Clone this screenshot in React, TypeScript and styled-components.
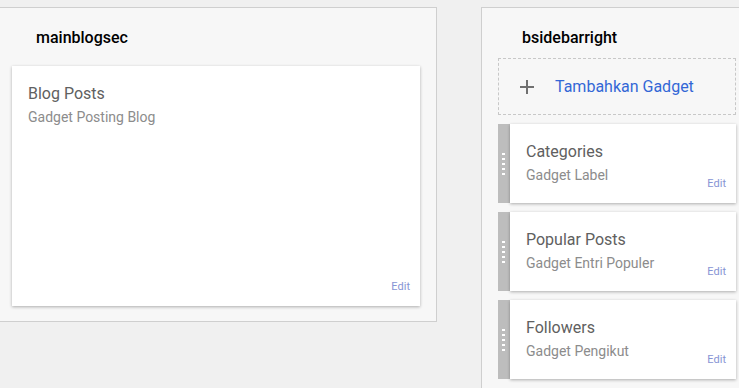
import React from 'react'
import styled, { createGlobalStyle } from 'styled-components';

const GlobalStyle = createGlobalStyle`
    html, body {
        margin: 0;
        padding: 0;
        background: #f0f0f0;
        font-family: Roboto, "Liberation Sans", Arial, sans-serif;
        overflow: hidden;
    }
`;

const Page = styled.div`
    display: flex;
    align-items: flex-start;
    gap: 44px;
    padding-top: 7px;
    margin-left: -5px;
`;

const Section = styled.div<{ $width: number; $tall?: boolean }>`
    box-sizing: border-box;
    width: ${p => p.$width}px;
    flex-shrink: 0;
    min-height: ${p => (p.$tall ? '420px' : 'auto')};
    background: #f7f7f7;
    border: 1px solid #cfcfcf;
    padding: 20px 16px 15px;
`;

const SectionTitle = styled.div<{ $gap: number }>`
    padding-left: 24px;
    font-size: 16px;
    line-height: 20px;
    font-weight: 500;
    color: #000;
    margin-bottom: ${p => p.$gap}px;
`;

const BigCard = styled.div`
    display: flex;
    flex-direction: column;
    height: 240px;
    box-sizing: border-box;
    padding: 18px 10px 12px 16px;
    background: #fff;
    box-shadow: 0 1px 3px rgba(0, 0, 0, 0.3);
`;

const WidgetTitle = styled.div`
    font-size: 16px;
    line-height: 20px;
    color: #606060;
`;

const WidgetSub = styled.div`
    font-size: 14px;
    line-height: 18px;
    color: #8c8c8c;
    margin-top: 4px;
`;

const EditLink = styled.a`
    font-size: 11px;
    line-height: 14px;
    color: #8794d4;
    text-decoration: none;
    cursor: pointer;
    align-self: flex-end;
`;

const BigEdit = styled(EditLink)`
    margin-top: auto;
`;

const AddBox = styled.div`
    display: flex;
    align-items: center;
    gap: 21px;
    height: 57px;
    box-sizing: border-box;
    padding-left: 21px;
    border: 1px dashed #c8c8c8;
    margin-bottom: 9px;
`;

const AddLabel = styled.span`
    font-size: 16px;
    line-height: 20px;
    color: #3367d6;
`;

const GadgetList = styled.div`
    display: flex;
    flex-direction: column;
    gap: 9px;
`;

const GadgetRow = styled.div`
    display: flex;
    height: 79px;
`;

const Handle = styled.div`
    width: 12px;
    flex-shrink: 0;
    display: flex;
    align-items: center;
    padding-left: 4px;
    box-sizing: border-box;
    background: #bdbdbd;
    cursor: move;

    &::before {
        content: '';
        width: 3px;
        height: 22px;
        background: repeating-linear-gradient(to bottom, #fff 0 2px, transparent 2px 5px);
    }
`;

const GadgetBody = styled.div`
    flex: 1;
    display: grid;
    grid-template-columns: 1fr auto;
    grid-template-rows: auto 1fr;
    box-sizing: border-box;
    padding: 18px 10px 12px 16px;
    background: #fff;
    box-shadow: 0 1px 3px rgba(0, 0, 0, 0.3);

    ${WidgetTitle} {
        grid-column: 1 / 3;
    }
    ${WidgetSub} {
        align-self: start;
    }
    ${EditLink} {
        align-self: end;
    }
`;

const PlusIcon = () => (
    <svg width="14" height="14" viewBox="0 0 14 14">
        <path d="M7 0v14M0 7h14" stroke="#707070" strokeWidth="2" />
    </svg>
);

const gadgets = [
    { title: 'Categories', sub: 'Gadget Label' },
    { title: 'Popular Posts', sub: 'Gadget Entri Populer' },
    { title: 'Followers', sub: 'Gadget Pengikut' },
];

const App = () => {
  return (
    <>
      <GlobalStyle />
      <Page>
        <Section $width={442}>
          <SectionTitle $gap={18}>mainblogsec</SectionTitle>
          <BigCard>
            <WidgetTitle>Blog Posts</WidgetTitle>
            <WidgetSub>Gadget Posting Blog</WidgetSub>
            <BigEdit>Edit</BigEdit>
          </BigCard>
        </Section>
        <Section $width={272} $tall>
          <SectionTitle $gap={10}>bsidebarright</SectionTitle>
          <AddBox>
            <PlusIcon />
            <AddLabel>Tambahkan Gadget</AddLabel>
          </AddBox>
          <GadgetList>
            {gadgets.map(g => (
              <GadgetRow key={g.title}>
                <Handle />
                <GadgetBody>
                  <WidgetTitle>{g.title}</WidgetTitle>
                  <WidgetSub>{g.sub}</WidgetSub>
                  <EditLink>Edit</EditLink>
                </GadgetBody>
              </GadgetRow>
            ))}
          </GadgetList>
        </Section>
      </Page>
    </>
  )
}

export default App
